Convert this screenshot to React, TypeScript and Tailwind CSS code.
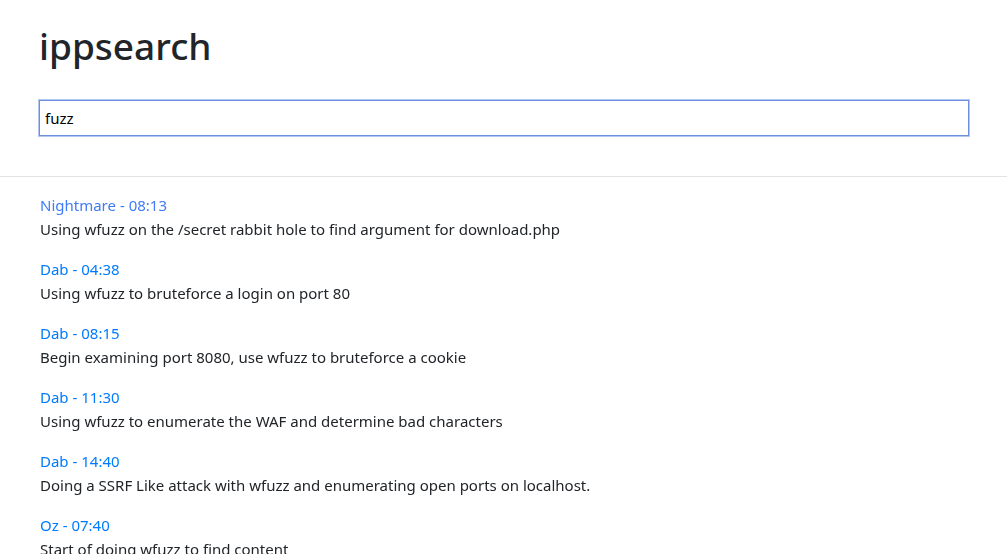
import { useState } from 'react';

const results = [
  { who: 'Nightmare', time: '08:13', text: 'Using wfuzz on the /secret rabbit hole to find argument for download.php', visited: true },
  { who: 'Dab', time: '04:38', text: 'Using wfuzz to bruteforce a login on port 80' },
  { who: 'Dab', time: '08:15', text: 'Begin examining port 8080, use wfuzz to bruteforce a cookie' },
  { who: 'Dab', time: '11:30', text: 'Using wfuzz to enumerate the WAF and determine bad characters' },
  { who: 'Dab', time: '14:40', text: 'Doing a SSRF Like attack with wfuzz and enumerating open ports on localhost.' },
  { who: 'Oz', time: '07:40', text: 'Start of doing wfuzz to find content' },
];

export default function App() {
  const [query, setQuery] = useState('fuzz');

  return (
    <div
      className="h-[554px] overflow-hidden bg-white text-[#212529]"
      style={{ fontFamily: '"Noto Sans", "Liberation Sans", sans-serif' }}
    >
      <div className="pl-[39px] pr-[38px] pt-[22px]">
        <h1 className="text-[37px] font-medium leading-[48px]">ippsearch</h1>
        <input
          autoFocus
          value={query}
          onChange={(e) => setQuery(e.target.value)}
          className="mt-[30px] block h-[36px] w-full border border-[#6d8fdc] px-[5px] text-[15px] text-black caret-black outline outline-1 outline-[#b3c8f2]"
        />
      </div>
      <hr className="mt-[40px] border-t border-[#e3e3e3]" />
      <div className="pl-[40px] pt-[16px] text-[15px] leading-[24px]">
        {results.map((r, i) => (
          <div key={i} className="mb-[16px]">
            <a href="#" className={r.visited ? 'text-[#3f7cf7]' : 'text-[#007bff]'}>
              {r.who} - {r.time}
            </a>
            <div>{r.text}</div>
          </div>
        ))}
      </div>
    </div>
  );
}
